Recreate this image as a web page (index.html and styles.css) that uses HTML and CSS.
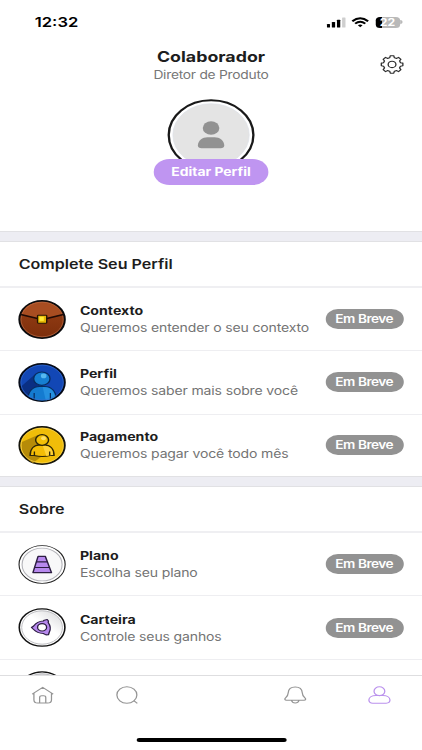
FILE: index.html
```html
<!DOCTYPE html>
<html lang="pt-BR">
<head>
<meta charset="utf-8">
<title>Perfil</title>
<link rel="stylesheet" href="styles.css">
</head>
<body>
<div class="screen">
  <header class="status">
    <span class="time">12:32</span>
    <div class="signals">
      <svg class="cell" viewBox="0 0 16 11"><rect x="0" y="7" width="2.5" height="3.6" rx=".5"/><rect x="4" y="5" width="2.7" height="5.6" rx=".5"/><rect x="8.2" y="2.8" width="2.7" height="7.8" rx=".5"/><rect x="12.4" y=".4" width="2.8" height="10.2" rx=".5" fill="#cfcfcf"/></svg>
      <svg class="wifi" viewBox="0 0 15 11" fill="none" stroke="#000" stroke-width="1.9"><path d="M.8 4.2Q7.5-2 14.2 4.2"/><path d="M3.2 6.6Q7.5 2.8 11.8 6.6"/><path d="M7.5 10.3 5.5 8.4Q7.5 6.8 9.5 8.4Z" fill="#000" stroke="none"/></svg>
      <div class="battery"><span>22</span></div>
    </div>
  </header>

  <section class="profile">
    <h1>Colaborador</h1>
    <p class="role">Diretor de Produto</p>
    <svg class="gear" viewBox="0 0 20 20" fill="none" stroke="#2c2c2c" stroke-width="1.15" stroke-linejoin="round"><path d="M8.500.8h3l.5 2.100q1 .3 1.800.8l1.900-1.200 2.100 2.100-1.200 1.900q.5.8.8 1.800l2.100.4v2.800l-2.100.5q-.3 1-.8 1.800l1.200 1.900-2.100 2.100-1.900-1.200q-.8.5-1.800.8l-.5 2.100h-3L8 17.400q-1-.3-1.800-.8l-1.900 1.200-2.100-2.100 1.200-1.900q-.5-.8-.8-1.800l-2-.5V8.700l2-.4q.3-1 .8-1.800L2.200 4.600l2.100-2.100 1.900 1.200Q7 3.200 8 2.900Z"/><circle cx="10" cy="10.100" r="3.400"/></svg>
    <div class="avatar">
      <svg viewBox="0 0 72 72"><circle cx="36" cy="36" r="34.700" fill="#fff" stroke="#191919" stroke-width="1.900"/><circle cx="36" cy="36" r="31.300" fill="#e4e4e4" stroke="#dce1e9" stroke-width=".6"/><circle cx="36" cy="29" r="6.800" fill="#929292"/><path d="M25.200 46.500c0-5 3.700-8.300 8-8.300h5.600c4.300 0 8 3.300 8 8.300 0 1.700-1.200 2.700-3 2.700H28.200c-1.800 0-3-1-3-2.700Z" fill="#929292"/></svg>
      <button class="edit">Editar Perfil</button>
    </div>
  </section>

  <main class="list">
    <div class="band"></div>
    <h2>Complete Seu Perfil</h2>
    <article class="row">
      <svg class="icon" viewBox="0 0 39 39"><defs><linearGradient id="leather" x2="0" y2="1"><stop offset="0" stop-color="#aa4e20"/><stop offset=".45" stop-color="#8c3811"/><stop offset="1" stop-color="#7c2e0b"/></linearGradient></defs><circle cx="19.500" cy="19.500" r="18.600" fill="url(#leather)" stroke="#0b0b0d" stroke-width="1.700"/><path d="M2.500 14.500Q5 5 14 2.700 30 .5 36 14.500L23.300 18.500h-7.500Z" fill="#a84d21"/><circle cx="19.500" cy="19.500" r="17.300" fill="none" stroke="#bb6b45" stroke-width=".6"/><path d="M2 14.500 15.700 18.500h7.700L37 14.500" fill="none" stroke="#210b05" stroke-width="1.600"/><rect x="15.800" y="15.200" width="7.500" height="8" rx=".6" fill="#e5b706" stroke="#241403" stroke-width="1.100"/><path d="M17.300 16.800h3.600v4.100h-3.600Z" fill="#ffeb38"/></svg>
      <div class="copy"><h3>Contexto</h3><p>Queremos entender o seu contexto</p></div>
      <span class="badge">Em Breve</span>
    </article>
    <article class="row">
      <svg class="icon" viewBox="0 0 39 39"><defs><clipPath id="disc"><circle cx="19.500" cy="19.500" r="18"/></clipPath></defs><circle cx="19.500" cy="19.500" r="18.600" fill="#1247b5" stroke="#060b18" stroke-width="1.700"/><g clip-path="url(#disc)"><path d="M0 26 14 11l6 14-13 16H0Z" fill="#0a2f83"/><path d="M8 41v-5c0-8 4-12.500 9.500-12.500h4C27 23.500 31 28 31 36v5Z" fill="#147bd0" stroke="#082c60" stroke-width="1.100"/><path d="M20 24c7 0 9.500 4 10 11v5h-7Z" fill="#2590df"/><path d="M13 30v10M26.300 30v10" stroke="#082c60" stroke-width="1"/></g><circle cx="19.300" cy="15.700" r="6.700" fill="#167fd2" stroke="#082c60" stroke-width="1.100"/><circle cx="20.800" cy="12.900" r="2.300" fill="#57b9f0"/><circle cx="19.500" cy="19.500" r="17.400" fill="none" stroke="#376dce" stroke-width=".6"/></svg>
      <div class="copy"><h3>Perfil</h3><p>Queremos saber mais sobre você</p></div>
      <span class="badge">Em Breve</span>
    </article>
    <article class="row">
      <svg class="icon" viewBox="0 0 39 39"><circle cx="19.500" cy="19.500" r="18.600" fill="#f0bd09" stroke="#15140b" stroke-width="1.600"/><path d="M3 16 16 9l8 17-12 11Q1 29 3 16Z" fill="#b68b08"/><path d="M9.700 29.500c0-7 3.300-10.700 8-10.700h3.600c4.700 0 8 3.700 8 10.700H26q-6 2-13 0Z" fill="#f4bd06" stroke="#2c2507" stroke-width="1.200"/><path d="M20 19.500c6 0 8 4 8.500 9.300L23 30Z" fill="#ffd33a"/><path d="M13.200 25.500v4.200M25.700 25.500v4.200" stroke="#2c2507" stroke-width="1.100"/><circle cx="19.500" cy="14" r="5.300" fill="#f4c006" stroke="#2c2507" stroke-width="1.200"/><circle cx="20.700" cy="12.300" r="2" fill="#ffe168"/><circle cx="19.500" cy="19.500" r="17.400" fill="none" stroke="#f9d75a" stroke-width=".6"/></svg>
      <div class="copy"><h3>Pagamento</h3><p>Queremos pagar você todo mês</p></div>
      <span class="badge">Em Breve</span>
    </article>
    <div class="band"></div>
    <h2>Sobre</h2>
    <article class="row">
      <svg class="icon" viewBox="0 0 39 39"><circle cx="19.500" cy="19.500" r="18.900" fill="#fff" stroke="#222" stroke-width=".9"/><circle cx="19.500" cy="19.500" r="16.400" fill="#f8f8f9" stroke="#b2b2b8" stroke-width=".9"/><path d="M16.200 11.300h5.900L27.200 27.600H12Z" fill="#b789ee" stroke="#2c1d42" stroke-width="1.200" stroke-linejoin="round"/><path d="M14.700 16.900h8.900M13.200 22.500h12.200" stroke="#2c1d42" stroke-width="1.200"/></svg>
      <div class="copy"><h3>Plano</h3><p>Escolha seu plano</p></div>
      <span class="badge">Em Breve</span>
    </article>
    <article class="row">
      <svg class="icon" viewBox="0 0 39 39"><defs><linearGradient id="coin" x1="1" y1="0" x2=".35" y2=".8"><stop stop-color="#d5d5d7"/><stop offset=".6" stop-color="#fff"/></linearGradient></defs><circle cx="19.500" cy="19.500" r="18.700" fill="#fff" stroke="#111" stroke-width="1.300"/><circle cx="19.500" cy="19.500" r="16.700" fill="url(#coin)" stroke="#b7b7bb" stroke-width=".8"/><path d="M10.800 19.500 12.600 18Q15.500 13.200 20.500 13L21.300 12.200 23.700 11.500 24.700 13 24.500 14.500Q27.500 19.500 25.300 24.500L24.700 26.800 22.700 26.900 20.500 25.500Q15.500 25.300 12.600 21.500Z" fill="#b789ee" stroke="#2c1d42" stroke-width="1.100" stroke-linejoin="round"/><circle cx="19.500" cy="19.300" r="3.700" fill="#fff" stroke="#2c1d42" stroke-width="1.100"/></svg>
      <div class="copy"><h3>Carteira</h3><p>Controle seus ganhos</p></div>
      <span class="badge">Em Breve</span>
    </article>
    <article class="row">
      <svg class="icon" viewBox="0 0 39 39"><circle cx="19.500" cy="19.500" r="18.700" fill="#fff" stroke="#111" stroke-width="1.300"/><circle cx="19.500" cy="19.500" r="16.700" fill="#d8d8da" stroke="#b7b7bb"/></svg>
    </article>
  </main>

  <nav class="tabs">
    <div class="tab"><svg viewBox="0 0 20 20"><path d="M.4 8.800 10 1.200l9.600 7.600M2 7.800V15q0 3.700 3.500 3.700h9q3.500 0 3.500-3.700V7.800M7.200 18.500v-6q0-2 2-2h1.600q2 0 2 2v6"/></svg></div>
    <div class="tab"><svg viewBox="0 0 20 20"><circle cx="10" cy="9.700" r="9.100"/><path d="m16.300 15.900 3.200 3"/></svg></div>
    <div class="tab"></div>
    <div class="tab"><svg viewBox="0 0 20 20"><path d="M10 .9c-4.500 0-6.200 2.900-6.400 6.400-.1 3-.9 4.200-2.400 5.600-1.200 1.300-.7 2.700.8 2.700h16c1.500 0 2-1.400.8-2.700-1.500-1.400-2.300-2.600-2.400-5.600C16.200 3.800 14.500.9 10 .9ZM6.600 15.700c.8 3.900 6 3.900 6.800 0"/></svg></div>
    <div class="tab active"><svg viewBox="0 0 20 20"><circle cx="10" cy="5.500" r="4.900"/><path d="M.4 15.400c0-3.500 3.200-5.200 6.400-5.200h6.400c3.200 0 6.400 1.700 6.400 5.200 0 2.300-1.400 3.400-3.500 3.400H3.900C1.800 18.800.4 17.700.4 15.400Z"/></svg></div>
  </nav>
  <div class="home-bar"></div>
</div>
</body>
</html>
```
FILE: styles.css
```css
* { box-sizing: border-box; margin: 0; padding: 0; }
body { width: 422px; height: 750px; overflow: hidden; background: #fff; }

/* Natural proportions inside, widened to fill the window. */
.screen {
  width: 345.9px;
  height: 750px;
  display: flex;
  flex-direction: column;
  overflow: hidden;
  position: relative;
  background: #fff;
  color: #1d1d1d;
  font-family: Inter, "Liberation Sans", sans-serif;
  transform: scaleX(1.22);
  transform-origin: 0 0;
}
svg { display: block; overflow: visible; }

.status {
  height: 44px;
  flex: none;
  display: flex;
  justify-content: space-between;
  align-items: center;
  padding: 0 16.8px 0 28.5px;
}
.time { font-size: 13.6px; font-weight: 600; color: #000; }
.signals { display: flex; align-items: center; }
.cell { width: 16px; height: 11px; margin-right: 4px; }
.wifi { width: 14.5px; height: 11px; margin-right: 5px; }
.battery {
  width: 20px;
  height: 11px;
  border-radius: 3.5px;
  margin-right: 1.5px;
  background: linear-gradient(90deg, #000 24%, #b9b9b9 24%);
  color: #fff;
  font-size: 10px;
  font-weight: 700;
  line-height: 11px;
  text-align: center;
  position: relative;
}
.battery::after {
  content: "";
  position: absolute;
  right: -2px;
  top: 3.5px;
  width: 1.2px;
  height: 4px;
  border-radius: 0 2px 2px 0;
  background: #b9b9b9;
}

.profile {
  height: 187px;
  flex: none;
  display: flex;
  flex-direction: column;
  align-items: center;
  position: relative;
}
h1 { font-size: 14.6px; line-height: 20px; font-weight: 700; margin-top: 3px; }
.role { font-size: 11.3px; line-height: 16px; letter-spacing: -.2px; color: #777; }
.gear { position: absolute; right: 15.3px; top: 11px; width: 18.7px; height: 18.7px; }
.avatar { margin-top: 16.2px; width: 72px; height: 87px; position: relative; }
.avatar svg { width: 72px; height: 72px; }
.edit {
  position: absolute;
  left: -10.7px;
  top: 60px;
  width: 93.4px;
  height: 25.6px;
  border: 0;
  border-radius: 13px;
  background: #bf95f1;
  color: #fff;
  font: 700 11.4px/25.6px Inter, sans-serif;
  padding-top: 1px;
}

.list { flex: 1; min-height: 0; overflow: hidden; }
.band { height: 11px; background: #ededf3; border-top: 1px solid #e1e1e4; border-bottom: 1px solid #e1e1e4; }
h2 {
  height: 46px;
  padding-left: 15.3px;
  border-bottom: 2px solid #efeff2;
  font-size: 13.2px;
  line-height: 44px;
  font-weight: 600;
}
.row {
  height: 63.3px;
  display: flex;
  align-items: center;
  padding: 0 15.3px 0 15.4px;
  border-bottom: 1px solid #eeeef1;
}
.row:has(+ .band) { border-bottom: 0; height: 61.6px; }
.icon { width: 39px; height: 39px; flex: none; margin-right: 11.1px; }
.copy { flex: 1; white-space: nowrap; padding-top: 1.8px; }
h3 { font-size: 11.6px; line-height: 17px; font-weight: 650; }
.copy p { font-size: 11.5px; line-height: 17px; letter-spacing: -.12px; color: #747474; }
.badge {
  width: 64px;
  height: 20px;
  border-radius: 10px;
  background: #929292;
  color: #fff;
  font-size: 11.2px;
  line-height: 20px;
  font-weight: 600;
  letter-spacing: -.4px;
  text-align: center;
  flex: none;
}

.tabs { height: 75px; flex: none; border-top: 1px solid #dedee0; display: flex; background: #fff; }
.tab { flex: 1; display: flex; justify-content: center; padding-top: 9.8px; }
.tab svg { width: 18px; height: 18.5px; fill: none; stroke: #949494; stroke-width: 1.15; }
.tab.active svg { stroke: #ba91ed; }
.home-bar {
  position: absolute;
  left: 111.7px;
  bottom: 7.7px;
  width: 123px;
  height: 4.3px;
  border-radius: 2px;
  background: #000;
}
```
